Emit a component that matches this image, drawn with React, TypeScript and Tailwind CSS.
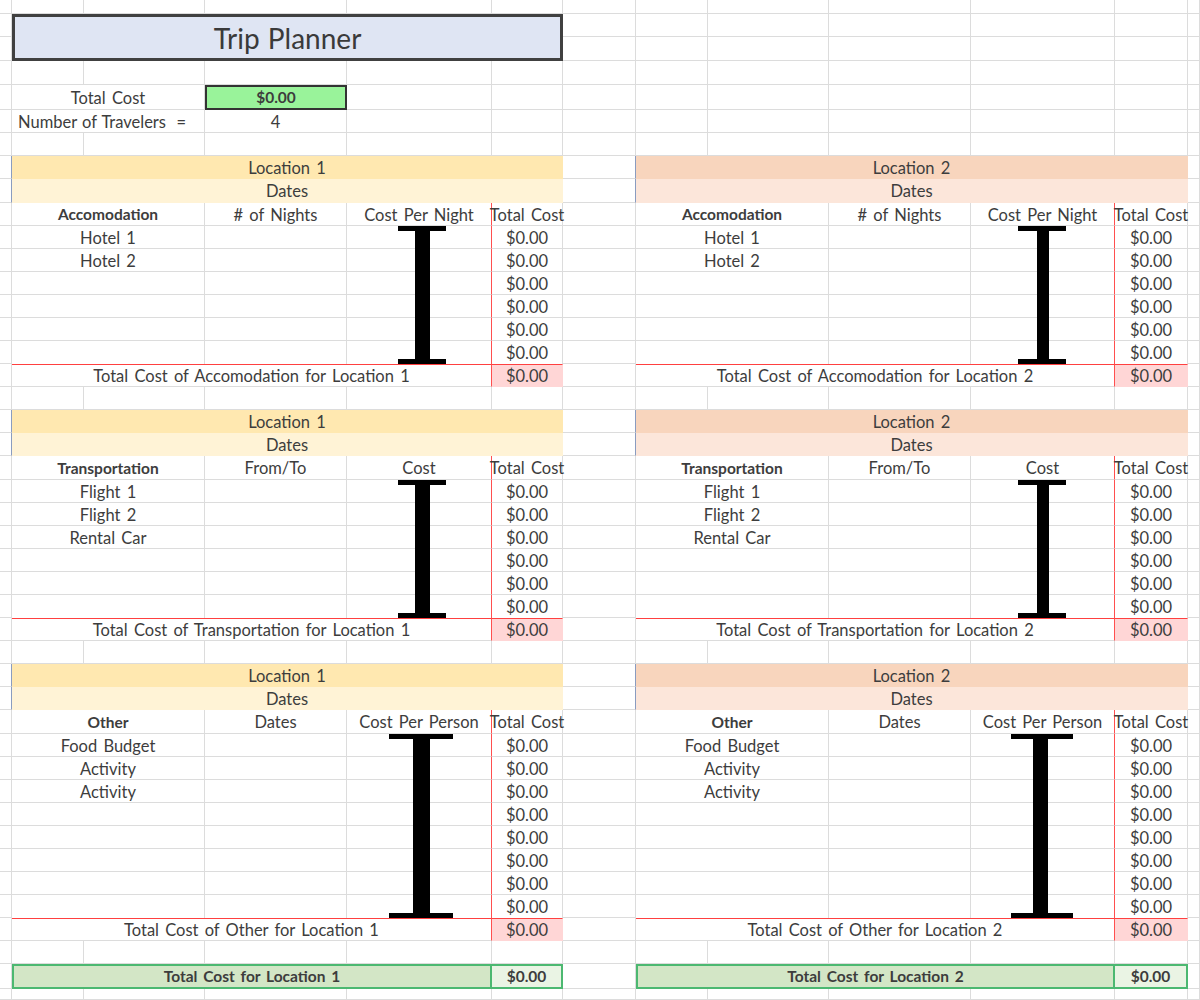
import React from 'react';
import { twMerge } from 'tailwind-merge';

// 13 sheet columns: A..M
const ROW =
  'grid grid-cols-[12px_72px_121px_142px_145px_71px_73px_72px_121px_142px_144px_73px_12px]';

const RED_R = 'border-r-[#ff4f4f]';
const RED_T = 'border-t border-t-[#ff4040]';
const BLUE_R = 'border-r-[#8a9cc0]';
const BOLD = 'font-bold text-[15.5px]';

function Cell({ className, children }: { className?: string; children?: React.ReactNode }) {
  return (
    <div
      className={twMerge(
        'flex items-center justify-center whitespace-nowrap pt-[2px] border-r border-b border-r-[#dcdcdc] border-b-[#dcdcdc]',
        className
      )}
    >
      {children}
    </div>
  );
}

function Blanks({ n }: { n: number }) {
  return (
    <>
      {Array.from({ length: n }).map((_, i) => (
        <Cell key={i} />
      ))}
    </>
  );
}

function EmptyRow({ h }: { h: string }) {
  return (
    <div className={twMerge(ROW, h)}>
      <Blanks n={13} />
    </div>
  );
}

function IBeam({ className, w, h, sx, sw }: { className: string; w: number; h: number; sx: number; sw: number }) {
  return (
    <svg className={className} width={w} height={h} viewBox={`0 0 ${w} ${h}`}>
      <rect x={0} y={0} width={w} height={5} fill="#000" />
      <rect x={sx} y={0} width={sw} height={h} fill="#000" />
      <rect x={0} y={h - 5} width={w} height={5} fill="#000" />
    </svg>
  );
}

type SectionProps = {
  kind: string;
  col2: string;
  col3: string;
  items: string[];
  rows: number;
  heights: [string, string, string];
  wide?: boolean;
};

function Section({ kind, col2, col3, items, rows, heights, wide }: SectionProps) {
  return (
    <div className="relative">
      {/* Location header */}
      <div className={twMerge(ROW, heights[0])}>
        <Cell className={BLUE_R} />
        <Cell className="col-span-5 bg-[#ffe8b0] border-r-transparent border-b-transparent">Location 1</Cell>
        <Cell className={BLUE_R} />
        <Cell className="col-span-5 bg-[#f8d5bd] border-r-transparent border-b-transparent">Location 2</Cell>
        <Cell />
      </div>
      <div className={twMerge(ROW, heights[1])}>
        <Cell className={BLUE_R} />
        <Cell className="col-span-5 bg-[#fff3d6] border-r-transparent border-b-transparent">Dates</Cell>
        <Cell className={BLUE_R} />
        <Cell className="col-span-5 bg-[#fce6da] border-r-transparent border-b-transparent">Dates</Cell>
        <Cell />
      </div>

      {/* Column titles */}
      <div className={twMerge(ROW, heights[2])}>
        <Cell />
        <Cell className={twMerge('col-span-2', BOLD)}>{kind}</Cell>
        <Cell>{col2}</Cell>
        <Cell className={RED_R}>{col3}</Cell>
        <Cell>Total Cost</Cell>
        <Cell />
        <Cell className={twMerge('col-span-2', BOLD)}>{kind}</Cell>
        <Cell>{col2}</Cell>
        <Cell className={RED_R}>{col3}</Cell>
        <Cell>Total Cost</Cell>
        <Cell />
      </div>

      {/* Line items */}
      {Array.from({ length: rows }).map((_, i) => {
        const last = i === rows - 1 ? 'border-b-0' : '';
        return (
          <div key={i} className={twMerge(ROW, 'h-[23px]')}>
            <Cell />
            <Cell className={twMerge('col-span-2', last)}>{items[i] ?? ''}</Cell>
            <Cell className={last} />
            <Cell className={twMerge(RED_R, last)} />
            <Cell className={last}>$0.00</Cell>
            <Cell />
            <Cell className={twMerge('col-span-2', last)}>{items[i] ?? ''}</Cell>
            <Cell className={last} />
            <Cell className={twMerge(RED_R, last)} />
            <Cell className={last}>$0.00</Cell>
            <Cell />
          </div>
        );
      })}

      {/* Subtotal */}
      <div className={twMerge(ROW, 'h-[23px]')}>
        <Cell />
        <Cell className={twMerge('col-span-4', RED_R, RED_T)}>Total Cost of {kind} for Location 1</Cell>
        <Cell className={twMerge('bg-[#ffd6d6] border-r-transparent border-b-transparent', RED_T)}>$0.00</Cell>
        <Cell />
        <Cell className={twMerge('col-span-4', RED_R, RED_T)}>Total Cost of {kind} for Location 2</Cell>
        <Cell className={twMerge('bg-[#ffd6d6] border-r-transparent border-b-transparent', RED_T)}>$0.00</Cell>
        <Cell />
      </div>
      <EmptyRow h="h-[23px]" />

      {wide ? (
        <>
          <IBeam className="absolute left-[389px] top-[70px]" w={64} h={184} sx={24} sw={17} />
          <IBeam className="absolute left-[1011px] top-[70px]" w={62} h={184} sx={22} sw={15} />
        </>
      ) : (
        <>
          <IBeam className="absolute left-[398px] top-[70px]" w={48} h={138} sx={17} sw={15} />
          <IBeam className="absolute left-[1018px] top-[70px]" w={48} h={138} sx={19} sw={12} />
        </>
      )}
    </div>
  );
}

export default function App() {
  return (
    <div className="w-[1200px] h-[1000px] overflow-hidden bg-white font-['Lato',sans-serif] text-[16.5px] [word-spacing:2px] leading-none text-[#3d3d3d]">
      <EmptyRow h="h-[14px]" />

      {/* Title */}
      <div className={twMerge(ROW, 'grid-rows-[23px_24px]')}>
        <Cell />
        <Cell className="col-span-5 row-span-2 pt-0 bg-[#dfe5f3] border-[3px] border-[#404040] text-[28px] [word-spacing:1px] text-[#3a3a3a]">
          Trip Planner
        </Cell>
        <Blanks n={7} />
        <Cell />
        <Blanks n={7} />
      </div>

      <EmptyRow h="h-[24px]" />

      <div className={twMerge(ROW, 'h-[25px]')}>
        <Cell />
        <Cell className="col-span-2">Total Cost</Cell>
        <Cell className={twMerge('bg-[#99f39a] border-2 border-[#333333] pt-0', BOLD)}>$0.00</Cell>
        <Blanks n={9} />
      </div>
      <div className={twMerge(ROW, 'h-[23px]')}>
        <Cell />
        <Cell className="col-span-2 justify-start pl-[6px] whitespace-pre [word-spacing:1px]">Number of Travelers  =</Cell>
        <Cell>4</Cell>
        <Blanks n={9} />
      </div>
      <EmptyRow h="h-[23px]" />

      <Section
        kind="Accomodation"
        col2="# of Nights"
        col3="Cost Per Night"
        items={['Hotel 1', 'Hotel 2']}
        rows={6}
        heights={['h-[23px]', 'h-[24px]', 'h-[23px]']}
      />
      <Section
        kind="Transportation"
        col2="From/To"
        col3="Cost"
        items={['Flight 1', 'Flight 2', 'Rental Car']}
        rows={6}
        heights={['h-[23px]', 'h-[23px]', 'h-[24px]']}
      />
      <Section
        kind="Other"
        col2="Dates"
        col3="Cost Per Person"
        items={['Food Budget', 'Activity', 'Activity']}
        rows={8}
        heights={['h-[23px]', 'h-[23px]', 'h-[24px]']}
        wide
      />

      {/* Grand totals */}
      <div className={twMerge(ROW, 'h-[25px]')}>
        <Cell />
        <Cell className={twMerge('col-span-4 bg-[#d3e6c6] border-2 border-[#4cb871] pt-0', BOLD)}>Total Cost for Location 1</Cell>
        <Cell className={twMerge('bg-[#eaf4e4] border-2 border-l-0 border-[#4cb871] pt-0', BOLD)}>$0.00</Cell>
        <Cell />
        <Cell className={twMerge('col-span-4 bg-[#d3e6c6] border-2 border-[#4cb871] pt-0', BOLD)}>Total Cost for Location 2</Cell>
        <Cell className={twMerge('bg-[#eaf4e4] border-2 border-l-0 border-[#4cb871] pt-0', BOLD)}>$0.00</Cell>
        <Cell />
      </div>
      <EmptyRow h="h-[11px]" />
    </div>
  );
}
